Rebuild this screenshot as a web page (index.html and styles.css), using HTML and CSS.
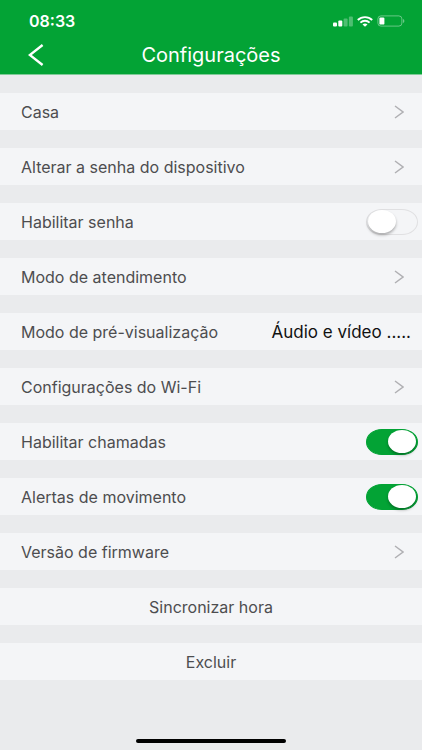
FILE: index.html
```html
<!DOCTYPE html>
<html lang="pt-BR">
<head>
  <meta charset="UTF-8" />
  <meta name="viewport" content="width=device-width, initial-scale=1.0"/>
  <title>Configurações</title>
  <link rel="stylesheet" href="styles.css">
</head>
<body>

  <header class="header">
    <div class="status-bar">
      <span class="time">08:33</span>
      <div class="status-icons">
        <svg width="20" height="11" viewBox="0 0 20 11" fill="#fff">
          <rect x="0" y="6.5" width="4" height="4" rx="1"/>
          <rect x="5.3" y="4.5" width="4" height="6" rx="1"/>
          <rect x="10.6" y="2.5" width="4" height="8" rx="1" opacity=".3"/>
          <rect x="15.9" y="0.5" width="4" height="10" rx="1" opacity=".3"/>
        </svg>
        <svg width="16" height="11" viewBox="0 0 16 11" fill="none" stroke="#fff" stroke-width="1.9">
          <path d="M0.8 4 C4.8 0.2 11.2 0.2 15.2 4"/>
          <path d="M3.4 6.6 C6 4.2 10 4.2 12.6 6.6"/>
          <path d="M5.5 8.5 C7 7.3 9 7.3 10.5 8.5 L8 10.8 Z" fill="#fff" stroke="none"/>
        </svg>
        <svg width="28" height="12" viewBox="0 0 28 12">
          <rect x="0.9" y="0.9" width="24" height="10.2" rx="3" fill="none" stroke="#fff" stroke-opacity=".4"/>
          <rect x="2.4" y="2.4" width="5" height="7.2" rx="1.2" fill="#fff"/>
          <path d="M26.2 4 C27.7 4.6 27.7 7.4 26.2 8 Z" fill="#fff" opacity=".5"/>
        </svg>
      </div>
    </div>
    <div class="nav-bar">
      <button class="back-btn" aria-label="Voltar">
        <svg width="16" height="22" viewBox="0 0 16 22" fill="none" stroke="#fff" stroke-width="2.4">
          <path d="M14.6 1 L1.8 11 L14.6 21"/>
        </svg>
      </button>
      <h1>Configurações</h1>
    </div>
  </header>

  <main class="settings">
    <a class="row" href="#casa">
      <span>Casa</span>
      <svg class="chevron" viewBox="0 0 10 14"><path d="M1 1 L9 7 L1 13"/></svg>
    </a>
    <a class="row" href="#senha">
      <span>Alterar a senha do dispositivo</span>
      <svg class="chevron" viewBox="0 0 10 14"><path d="M1 1 L9 7 L1 13"/></svg>
    </a>
    <div class="row row-switch">
      <label for="enablePassword">Habilitar senha</label>
      <input type="checkbox" class="switch" id="enablePassword" />
    </div>
    <a class="row" href="#atendimento">
      <span>Modo de atendimento</span>
      <svg class="chevron" viewBox="0 0 10 14"><path d="M1 1 L9 7 L1 13"/></svg>
    </a>
    <div class="row row-value">
      <span id="previewLabel">Modo de pré-visualização</span>
      <button class="value-btn" aria-describedby="previewLabel">Áudio e vídeo .....</button>
    </div>
    <a class="row" href="#wifi">
      <span>Configurações do Wi-Fi</span>
      <svg class="chevron" viewBox="0 0 10 14"><path d="M1 1 L9 7 L1 13"/></svg>
    </a>
    <div class="row row-switch">
      <label for="enableCalls">Habilitar chamadas</label>
      <input type="checkbox" class="switch" id="enableCalls" checked />
    </div>
    <div class="row row-switch">
      <label for="motionAlerts">Alertas de movimento</label>
      <input type="checkbox" class="switch" id="motionAlerts" checked />
    </div>
    <a class="row" href="#firmware">
      <span>Versão de firmware</span>
      <svg class="chevron" viewBox="0 0 10 14"><path d="M1 1 L9 7 L1 13"/></svg>
    </a>
    <button class="row row-action">Sincronizar hora</button>
    <button class="row row-action">Excluir</button>
  </main>

  <div class="home-indicator"></div>

</body>
</html>
```
FILE: styles.css
```css
* {
  box-sizing: border-box;
}
body {
  font-family: Inter, "Liberation Sans", sans-serif;
  font-size: 16px;
  line-height: 20px;
  color: #4d4d4f;
  background-color: #eaebed;
  margin: 0;
  min-height: 100vh;
  display: flex;
  flex-direction: column;
}
button {
  font: inherit;
  color: inherit;
  background: none;
  border: none;
  padding: 0;
  cursor: pointer;
}

/* Header */
.header {
  background: #03a335;
  color: white;
  border-bottom: 1px solid #7fcb97;
}
.status-bar {
  display: flex;
  justify-content: space-between;
  align-items: center;
  padding: 11px 17px 0 29px;
}
.time {
  font-size: 16px;
  font-weight: 600;
}
.status-icons {
  display: flex;
  align-items: center;
  gap: 4px;
}
.nav-bar {
  display: grid;
  grid-template-columns: 60px 1fr 60px;
  align-items: center;
  height: 43px;
  padding-top: 5px;
}
.back-btn {
  display: flex;
  padding-left: 28px;
}
.nav-bar h1 {
  margin: 0;
  font-size: 20px;
  font-weight: 400;
  text-align: center;
}

/* Settings list */
.settings {
  display: flex;
  flex-direction: column;
  gap: 18px;
  padding: 18px 0;
}
.row {
  display: flex;
  justify-content: space-between;
  align-items: center;
  width: 100%;
  min-height: 37px;
  padding: 0 18px 0 21px;
  background: #f4f5f7;
  color: inherit;
  text-decoration: none;
}
.row-value {
  padding-right: 11px;
}
.row-switch {
  padding-right: 4px;
}
.row-action {
  justify-content: center;
  padding: 0;
}
.value-btn {
  color: #111;
  font-size: 17px;
}
.chevron {
  width: 10px;
  height: 14px;
  fill: none;
  stroke: #b0b0b3;
  stroke-width: 1.5;
}

/* Switch */
.switch {
  appearance: none;
  display: flex;
  align-items: center;
  width: 52px;
  height: 26px;
  margin: 0;
  padding: 0 1px;
  border: 1px solid #e0e0e2;
  border-radius: 16px / 13px;
  cursor: pointer;
}
.switch::before {
  content: "";
  width: 28px;
  height: 23px;
  border-radius: 50%;
  background: white;
  box-shadow: 0 2px 3px rgba(0, 0, 0, 0.3);
}
.switch:checked {
  justify-content: flex-end;
  background: #03a335;
  border-color: #03a335;
}

.home-indicator {
  width: 150px;
  height: 4px;
  margin: auto auto 7px;
  border-radius: 2px;
  background: black;
}
```
